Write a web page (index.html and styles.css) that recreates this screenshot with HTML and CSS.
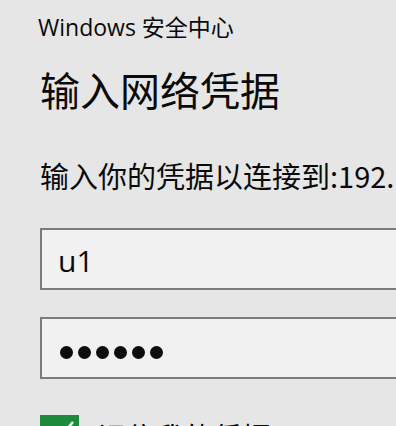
FILE: index.html
```html
<!DOCTYPE html>
<html lang="zh-CN">
<head>
<meta charset="utf-8">
<title>Windows 安全中心</title>
<link rel="stylesheet" href="styles.css">
</head>
<body>
<div class="dialog">
  <div class="app-name">Windows 安全中心</div>
  <h1 class="title">输入网络凭据</h1>
  <p class="prompt">输入你的凭据以连接到:192.168.1.10</p>
  <div class="field"><span class="field-text">u1</span></div>
  <div class="field password">
    <span class="dot"></span><span class="dot"></span><span class="dot"></span><span class="dot"></span><span class="dot"></span><span class="dot"></span>
  </div>
  <div class="remember">
    <span class="checkbox">
      <svg viewBox="0 0 39 39" width="39" height="39"><path d="M9 20 L16 27 L33 7" fill="none" stroke="#fff" stroke-width="2.5"/></svg>
    </span>
    <span class="remember-label">记住我的凭据</span>
  </div>
</div>
</body>
</html>
```
FILE: styles.css
```css
html, body {
  margin: 0;
  padding: 0;
  background: #e6e6e6;
  overflow: hidden;
}
.dialog {
  width: 396px;
  height: 426px;
  overflow: hidden;
  padding-left: 40px;
  box-sizing: border-box;
  font-family: "Segoe UI", "Open Sans", "Noto Sans CJK SC", sans-serif;
  color: #0a0a0a;
  white-space: nowrap;
}
.app-name {
  margin-top: 12px;
  margin-left: -2px;
  font-size: 23px;
  line-height: 30px;
}
.title {
  margin: 22px 0 0;
  font-size: 40px;
  font-weight: normal;
  line-height: 50px;
  font-family: "Noto Sans CJK SC", sans-serif;
}
.prompt {
  margin: 43px 0 0;
  font-size: 29px;
  line-height: 36px;
  font-family: "Noto Sans CJK SC", sans-serif;
}
.field {
  margin-top: 35px;
  width: 420px;
  height: 62px;
  box-sizing: border-box;
  border: 2px solid #7b7b7b;
  background: #f1f1f1;
  display: flex;
  align-items: center;
  padding-left: 16px;
}
.field-text {
  font-size: 30px;
  line-height: 1;
  padding-top: 4px;
}
.password {
  margin-top: 27px;
  gap: 5px;
  padding-left: 18px;
  padding-top: 8px;
}
.dot {
  width: 13px;
  height: 13px;
  border-radius: 50%;
  background: #0d0d0d;
}
.remember {
  margin-top: 36px;
  display: flex;
  align-items: flex-start;
  gap: 18px;
}
.checkbox {
  width: 39px;
  height: 39px;
  background: #1e8a3c;
  display: block;
  flex: none;
}
.checkbox svg {
  display: block;
}
.remember-label {
  font-size: 29px;
  line-height: 36px;
  font-family: "Noto Sans CJK SC", sans-serif;
  margin-top: 3px;
}
```
